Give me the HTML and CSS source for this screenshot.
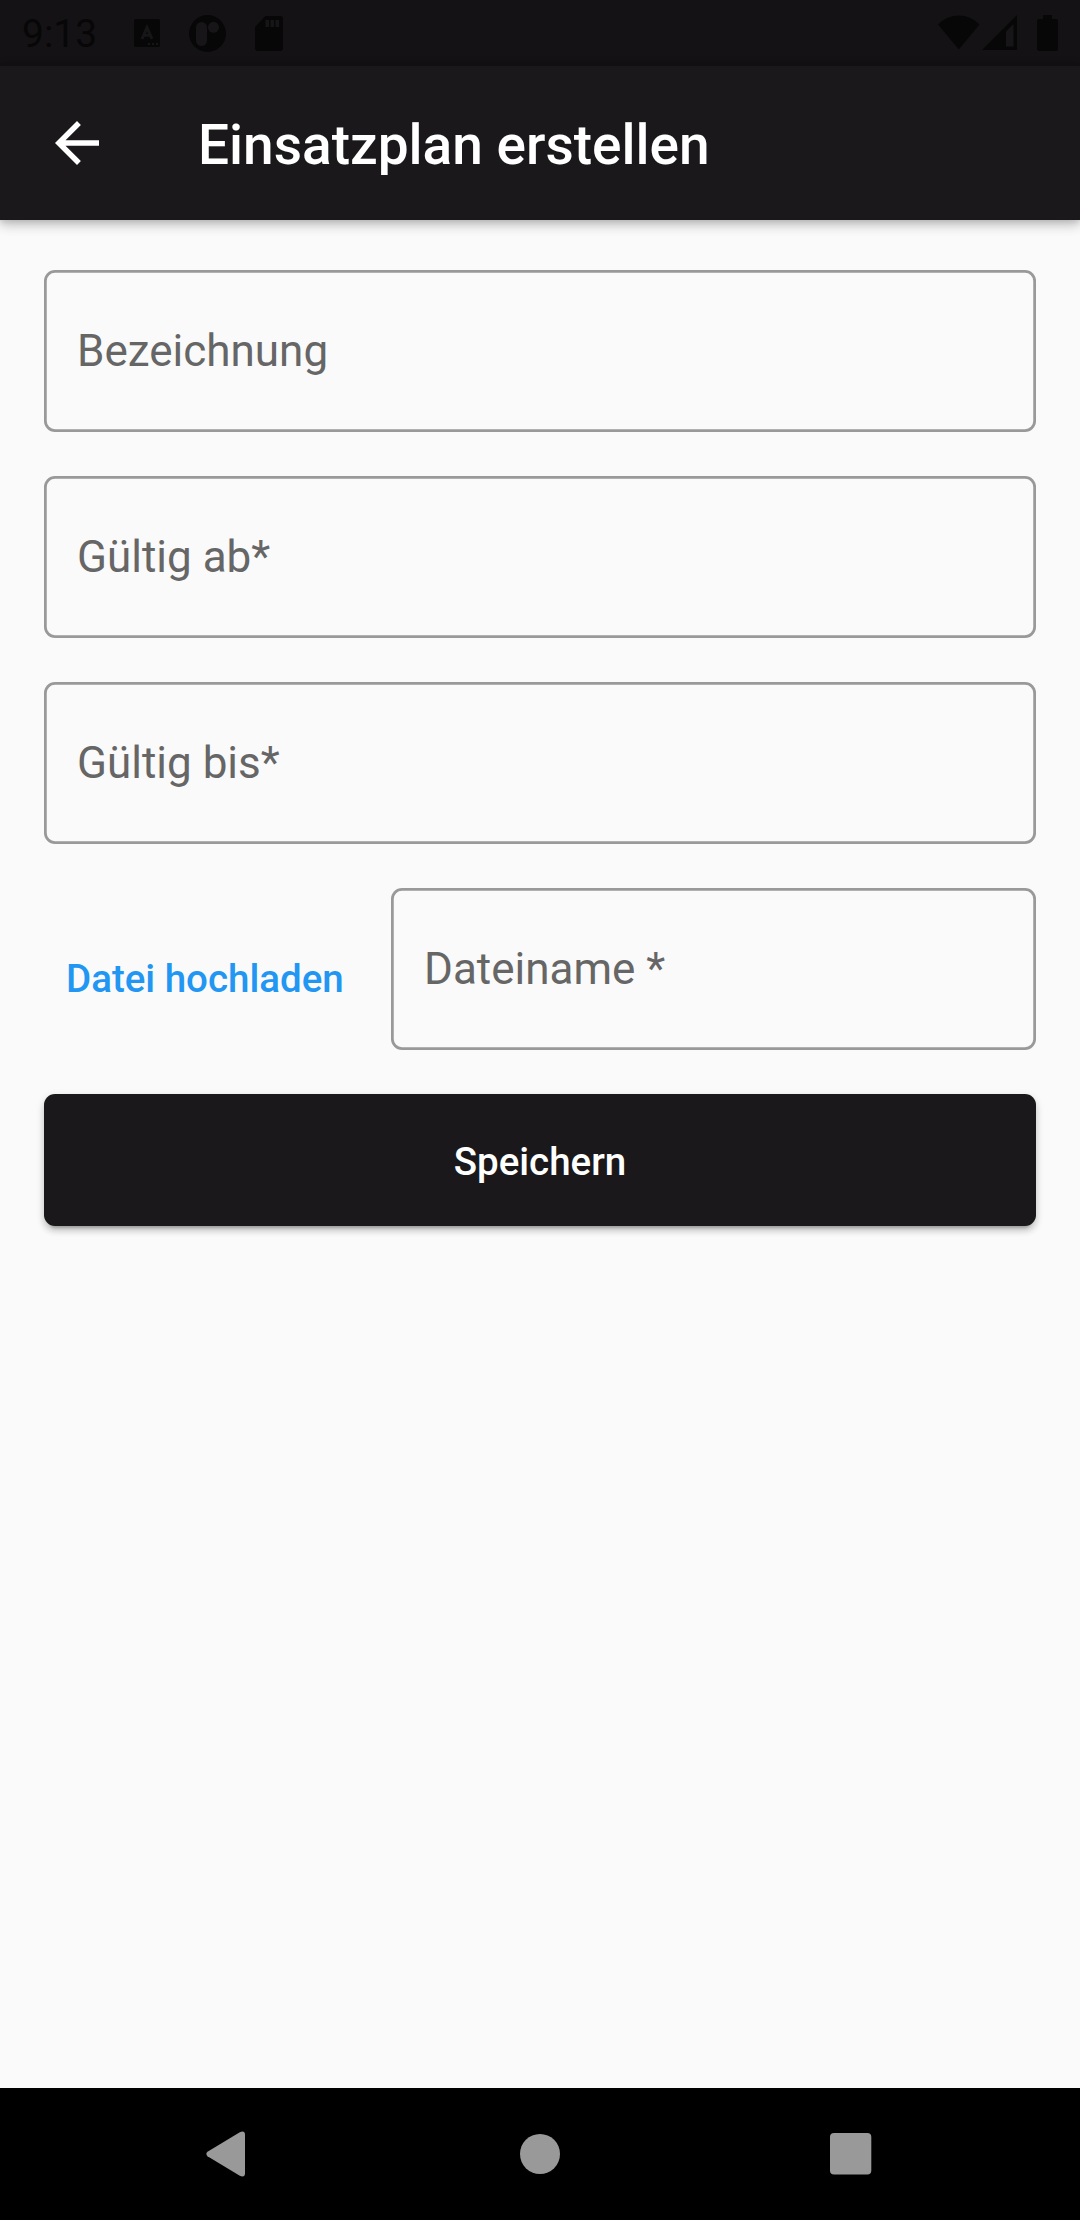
FILE: index.html
```html
<!DOCTYPE html>
<html lang="de">
<head>
<meta charset="utf-8">
<title>Einsatzplan erstellen</title>
<link rel="stylesheet" href="styles.css">
</head>
<body>
<div class="status-bar">
  <span class="clock">9:13</span>
  <svg class="icon-app" width="26" height="28" viewBox="0 0 26 28"><path fill-rule="evenodd" d="M2 0H24Q26 0 26 2V26Q26 28 24 28H2Q0 28 0 26V2Q0 0 2 0Z"/><path class="cut-line" d="M8 20L13 8.500L18 20M10 16.300H16"/><path class="cut" d="M14 24h2v2h-2zM18 24h2v2h-2zM22 24h2v2h-2z"/></svg>
  <svg class="icon-round" width="38" height="38" viewBox="0 0 38 38"><circle cx="18.500" cy="19.500" r="18.500"/><rect class="cut" x="7" y="8" width="11" height="24" rx="5.500"/><circle class="cut" cx="24.500" cy="13.300" r="5.500"/></svg>
  <svg class="icon-card" width="28" height="35" viewBox="0 0 28 35"><path d="M10.500 0H25Q28 0 28 3V32Q28 35 25 35H3Q0 35 0 32V11Z"/><path class="cut" d="M10.500 4h3.500v7h-3.500zM15.500 4h3.500v7h-3.500zM20.500 4h3.500v7h-3.500z"/></svg>
  <div class="system-icons">
    <svg width="42" height="35" viewBox="0 0 42 35"><path d="M0 9.500Q9 .5 20.800 .5T41.500 9.500L20.800 34.500Z"/></svg>
    <svg class="icon-signal" width="35" height="35" viewBox="0 0 35 35"><path d="M0 35L35 0V35Z"/><path class="cut" d="M24 16.500L31.500 9V31.500H24Z"/></svg>
    <svg class="icon-battery" width="22" height="36" viewBox="0 0 22 36"><path d="M6 0H15V4H19Q21 4 21 6V34Q21 36 19 36H2Q0 36 0 34V6Q0 4 2 4H6Z"/></svg>
  </div>
</div>
<header class="app-bar">
  <svg width="66" height="66" viewBox="0 0 24 24"><path d="M20 11H7.830L13.420 5.410L12 4L4 12L12 20L13.410 18.590L7.830 13H20Z"/></svg>
  <h1 class="title">Einsatzplan erstellen</h1>
</header>
<main class="form">
  <div class="field">Bezeichnung</div>
  <div class="field">Gültig ab*</div>
  <div class="field">Gültig bis*</div>
  <div class="file-row">
    <button class="upload">Datei hochladen</button>
    <div class="field">Dateiname *</div>
  </div>
  <button class="save">Speichern</button>
</main>
<nav class="nav-bar">
  <svg width="40" height="46" viewBox="0 0 40 46"><path d="M1.500 20.800L33.800 1.200Q38.800-.8 39 3.500V42.500Q38.800 46.800 33.800 44.800L1.500 25.200Q-.8 23 1.500 20.800Z"/></svg>
  <svg class="nav-home" width="40" height="40" viewBox="0 0 40 40"><circle cx="20" cy="20" r="20"/></svg>
  <svg class="nav-recent" width="42" height="42" viewBox="0 0 42 42"><rect width="41.300" height="41.500" rx="4"/></svg>
</nav>
</body>
</html>
```

FILE: styles.css
```css
* { box-sizing: border-box; }

body {
  margin: 0;
  width: 1080px;
  height: 2220px;
  display: flex;
  flex-direction: column;
  background: #fafafa;
  font-family: Roboto, "Liberation Sans", sans-serif;
}

svg { display: block; flex: none; }

.status-bar {
  height: 66px;
  display: flex;
  align-items: center;
  padding: 0 21px 0 22px;
  background: #141215;
  color: #070707;
}

.status-bar svg { fill: #070707; }
.status-bar .cut { fill: #171518; }
.status-bar .cut-line { fill: none; stroke: #171518; stroke-width: 3; }

.clock {
  width: 112px;
  padding-top: 2px;
  font-size: 39px;
  line-height: 46px;
}

.icon-round { margin-left: 29px; }
.icon-card { margin-left: 28px; }

.system-icons {
  display: flex;
  margin-left: auto;
}

.icon-signal { margin-left: 2px; }
.icon-battery { margin-left: 20px; }

.app-bar {
  height: 154px;
  display: flex;
  align-items: center;
  gap: 88px;
  padding-left: 44px;
  background: #1a181b;
  box-shadow: 0 5px 11px rgba(0, 0, 0, .14), 0 3px 14px rgba(0, 0, 0, .12), 0 2px 6px rgba(0, 0, 0, .1);
}

.app-bar svg { fill: #fff; }

.title {
  margin: 0;
  padding-top: 4px;
  color: #fff;
  font-size: 55px;
  font-weight: 500;
  line-height: 64px;
}

.form {
  flex: 1;
  display: flex;
  flex-direction: column;
  gap: 44px;
  padding: 50px 44px 0;
}

.field {
  height: 162px;
  display: flex;
  align-items: center;
  padding: 0 33px;
  border-radius: 11px;
  box-shadow: inset 0 0 0 2.750px #999;
  color: #666;
  font-size: 44px;
}

.file-row {
  display: flex;
  align-items: center;
}

.file-row .field {
  width: 645px;
  margin-left: auto;
}

button {
  border: 0;
  font: 500 38.500px/46px Roboto, "Liberation Sans", sans-serif;
}

.upload {
  padding: 20px 22px 0;
  background: none;
  color: #2196f3;
}

.save {
  height: 132px;
  padding: 4px 0 0;
  border-radius: 11px;
  background: #1a181b;
  color: #fff;
  box-shadow: 0 8px 3px -6px rgba(0, 0, 0, .2), 0 5px 6px rgba(0, 0, 0, .14), 0 3px 10px rgba(0, 0, 0, .12);
}

.nav-bar {
  height: 132px;
  display: flex;
  align-items: center;
  padding-left: 206px;
  background: #000;
}

.nav-bar svg { fill: #999; }
.nav-home { margin-left: 274px; }
.nav-recent { margin-left: 270px; }
```
